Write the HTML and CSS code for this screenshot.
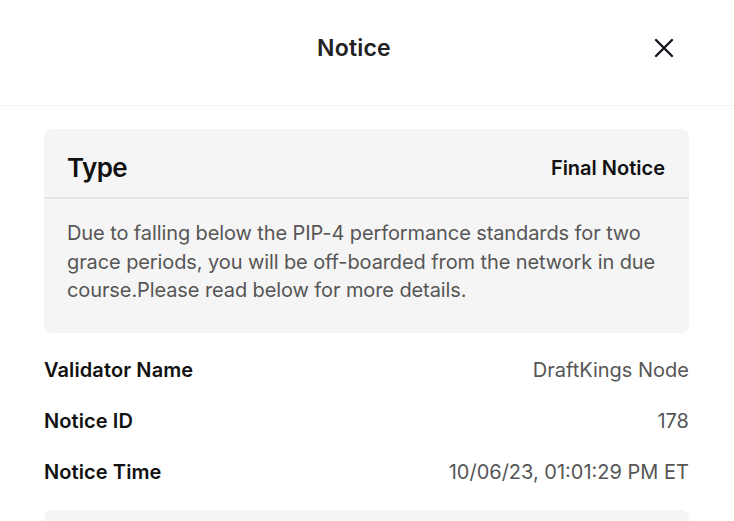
FILE: index.html
```html
<!DOCTYPE html>
<html>
<head>
<meta charset="utf-8">
<link rel="stylesheet" href="styles.css">
</head>
<body>
<div class="modal">
  <header class="modal-header">
    <h1 class="modal-title">Notice</h1>
    <button class="close-btn" aria-label="Close">
      <svg width="22" height="22" viewBox="0 0 22 22"><path d="M3 3 L19 19 M19 3 L3 19" stroke="#16161f" stroke-width="2.4" stroke-linecap="round"/></svg>
    </button>
  </header>
  <main class="modal-body">
    <section class="card">
      <div class="card-head">
        <span class="card-label">Type</span>
        <span class="card-value">Final Notice</span>
      </div>
      <p class="card-text">Due to falling below the PIP-4 performance standards for two grace periods, you will be off-boarded from the network in due course.Please read below for more details.</p>
    </section>
    <dl class="details">
      <div class="row"><dt>Validator Name</dt><dd>DraftKings Node</dd></div>
      <div class="row"><dt>Notice ID</dt><dd>178</dd></div>
      <div class="row"><dt>Notice Time</dt><dd>10/06/23, 01:01:29 PM ET</dd></div>
    </dl>
    <section class="card card-next"></section>
  </main>
</div>
</body>
</html>
```
FILE: styles.css
```css
* { box-sizing: border-box; }
html, body { margin: 0; padding: 0; background: #fff; }
body {
  font-family: Inter, "Noto Sans", sans-serif;
  color: #111;
  overflow: hidden;
  height: 521px;
}
.modal { width: 734px; height: 521px; overflow: hidden; }
.modal-header {
  height: 106px;
  display: flex;
  align-items: center;
  justify-content: center;
  position: relative;
  border-bottom: 1px solid #f3f3f3;
  padding: 0 26px 10px 0;
}
.modal-title {
  margin: 0;
  font-size: 23px;
  font-weight: 600;
  letter-spacing: 0.2px;
  color: #222;
}
.close-btn {
  position: absolute;
  left: 653px;
  top: 37px;
  border: 0;
  background: none;
  padding: 0;
  width: 22px;
  height: 22px;
  display: flex;
}
.modal-body {
  padding: 23px 45px 0 44px;
}
.card {
  background: #f5f5f5;
  border-radius: 8px;
}
.card-head {
  display: flex;
  justify-content: space-between;
  align-items: center;
  height: 70px;
  padding: 9px 24px 0 23px;
  border-bottom: 2px solid #e6e6e6;
}
.card-label {
  font-size: 26px;
  font-weight: 600;
  letter-spacing: -0.6px;
  color: #111;
}
.card-value {
  font-size: 20px;
  font-weight: 600;
  letter-spacing: 0;
  color: #111;
}
.card-text {
  margin: 0;
  padding: 20px 24px 28px 23px;
  font-size: 20px;
  line-height: 28.5px;
  letter-spacing: -0.1px;
  color: #565656;
}
.details {
  margin: 0;
  padding: 23px 0 23px;
  display: flex;
  flex-direction: column;
  gap: 22px;
}
.row {
  display: flex;
  justify-content: space-between;
  align-items: center;
  height: 29px;
}
.row dt {
  font-size: 20px;
  font-weight: 600;
  letter-spacing: 0.1px;
  color: #111;
}
.row dd {
  margin: 0;
  font-size: 20px;
  letter-spacing: 0;
  color: #565656;
}
.card-next { height: 11px; border-radius: 8px 8px 0 0; }
```
